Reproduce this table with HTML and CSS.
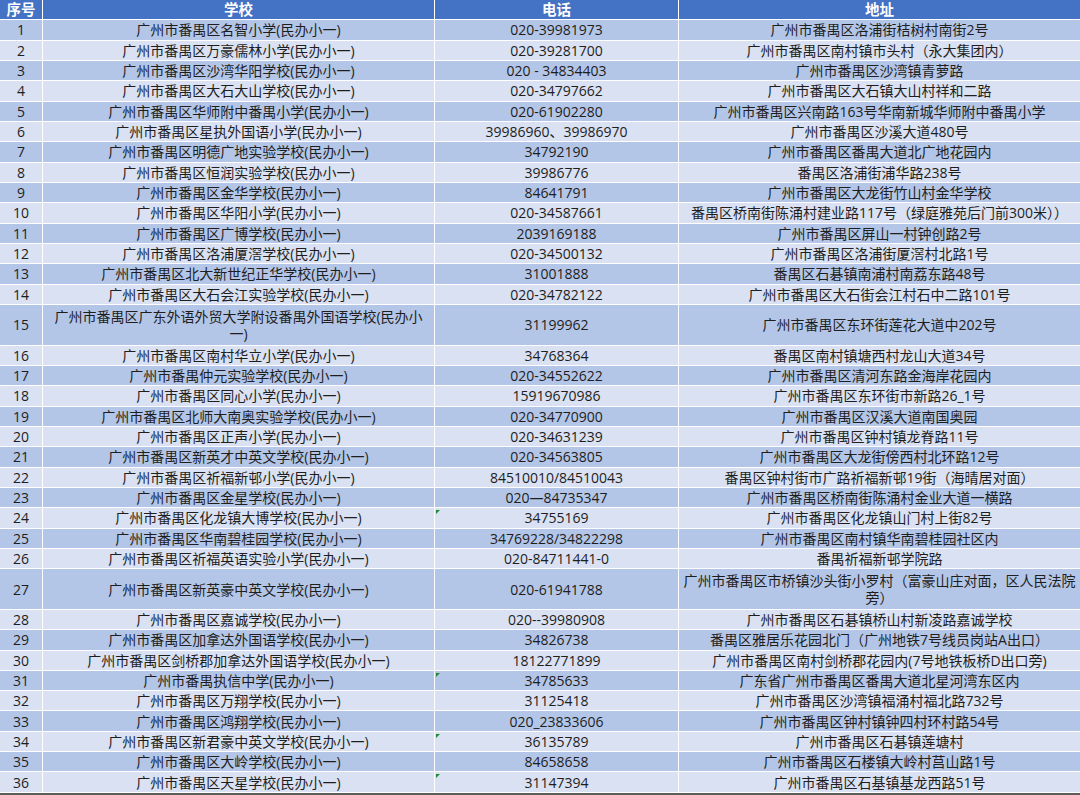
FILE: index.html
```html
<!DOCTYPE html>
<html lang="zh-CN">
<head>
<meta charset="utf-8">
<title>番禺区民办小学名单</title>
<link rel="stylesheet" href="styles.css">
</head>
<body>
<div class="table">
  <div class="row head"><div class="c">序号</div><div class="c">学校</div><div class="c">电话</div><div class="c">地址</div></div>
  <div class="row odd"><div class="c">1</div><div class="c">广州市番禺区名智小学(民办小一)</div><div class="c">020-39981973</div><div class="c">广州市番禺区洛浦街桔树村南街2号</div></div>
  <div class="row even"><div class="c">2</div><div class="c">广州市番禺区万豪儒林小学(民办小一)</div><div class="c">020-39281700</div><div class="c">广州市番禺区南村镇市头村（永大集团内）</div></div>
  <div class="row odd"><div class="c">3</div><div class="c">广州市番禺区沙湾华阳学校(民办小一)</div><div class="c">020 - 34834403</div><div class="c">广州市番禺区沙湾镇青萝路</div></div>
  <div class="row even"><div class="c">4</div><div class="c">广州市番禺区大石大山学校(民办小一)</div><div class="c">020-34797662</div><div class="c">广州市番禺区大石镇大山村祥和二路</div></div>
  <div class="row odd"><div class="c">5</div><div class="c">广州市番禺区华师附中番禺小学(民办小一)</div><div class="c">020-61902280</div><div class="c">广州市番禺区兴南路163号华南新城华师附中番禺小学</div></div>
  <div class="row even"><div class="c">6</div><div class="c">广州市番禺区星执外国语小学(民办小一)</div><div class="c">39986960、39986970</div><div class="c">广州市番禺区沙溪大道480号</div></div>
  <div class="row odd"><div class="c">7</div><div class="c">广州市番禺区明德广地实验学校(民办小一)</div><div class="c">34792190</div><div class="c">广州市番禺区番禺大道北广地花园内</div></div>
  <div class="row even"><div class="c">8</div><div class="c">广州市番禺区恒润实验学校(民办小一)</div><div class="c">39986776</div><div class="c">番禺区洛浦街浦华路238号</div></div>
  <div class="row odd"><div class="c">9</div><div class="c">广州市番禺区金华学校(民办小一)</div><div class="c">84641791</div><div class="c">广州市番禺区大龙街竹山村金华学校</div></div>
  <div class="row even"><div class="c">10</div><div class="c">广州市番禺区华阳小学(民办小一)</div><div class="c">020-34587661</div><div class="c">番禺区桥南街陈涌村建业路117号（绿庭雅苑后门前300米））</div></div>
  <div class="row odd"><div class="c">11</div><div class="c">广州市番禺区广博学校(民办小一)</div><div class="c">2039169188</div><div class="c">广州市番禺区屏山一村钟创路2号</div></div>
  <div class="row even"><div class="c">12</div><div class="c">广州市番禺区洛浦厦滘学校(民办小一)</div><div class="c">020-34500132</div><div class="c">广州市番禺区洛浦街厦滘村北路1号</div></div>
  <div class="row odd"><div class="c">13</div><div class="c">广州市番禺区北大新世纪正华学校(民办小一)</div><div class="c">31001888</div><div class="c">番禺区石碁镇南浦村南荔东路48号</div></div>
  <div class="row even"><div class="c">14</div><div class="c">广州市番禺区大石会江实验学校(民办小一)</div><div class="c">020-34782122</div><div class="c">广州市番禺区大石街会江村石中二路101号</div></div>
  <div class="row odd tall"><div class="c">15</div><div class="c">广州市番禺区广东外语外贸大学附设番禺外国语学校(民办小一)</div><div class="c">31199962</div><div class="c">广州市番禺区东环街莲花大道中202号</div></div>
  <div class="row even"><div class="c">16</div><div class="c">广州市番禺区南村华立小学(民办小一)</div><div class="c">34768364</div><div class="c">番禺区南村镇塘西村龙山大道34号</div></div>
  <div class="row odd"><div class="c">17</div><div class="c">广州市番禺仲元实验学校(民办小一)</div><div class="c">020-34552622</div><div class="c">广州市番禺区清河东路金海岸花园内</div></div>
  <div class="row even"><div class="c">18</div><div class="c">广州市番禺区同心小学(民办小一)</div><div class="c">15919670986</div><div class="c">广州市番禺区东环街市新路26_1号</div></div>
  <div class="row odd"><div class="c">19</div><div class="c">广州市番禺区北师大南奥实验学校(民办小一)</div><div class="c">020-34770900</div><div class="c">广州市番禺区汉溪大道南国奥园</div></div>
  <div class="row even"><div class="c">20</div><div class="c">广州市番禺区正声小学(民办小一)</div><div class="c">020-34631239</div><div class="c">广州市番禺区钟村镇龙脊路11号</div></div>
  <div class="row odd"><div class="c">21</div><div class="c">广州市番禺区新英才中英文学校(民办小一)</div><div class="c">020-34563805</div><div class="c">广州市番禺区大龙街傍西村北环路12号</div></div>
  <div class="row even"><div class="c">22</div><div class="c">广州市番禺区祈福新邨小学(民办小一)</div><div class="c">84510010/84510043</div><div class="c">番禺区钟村街市广路祈福新邨19街（海晴居对面）</div></div>
  <div class="row odd"><div class="c">23</div><div class="c">广州市番禺区金星学校(民办小一)</div><div class="c">020—84735347</div><div class="c">广州市番禺区桥南街陈涌村金业大道一横路</div></div>
  <div class="row even"><div class="c">24</div><div class="c">广州市番禺区化龙镇大博学校(民办小一)</div><div class="c mark">34755169</div><div class="c">广州市番禺区化龙镇山门村上街82号</div></div>
  <div class="row odd"><div class="c">25</div><div class="c">广州市番禺区华南碧桂园学校(民办小一)</div><div class="c">34769228/34822298</div><div class="c">广州市番禺区南村镇华南碧桂园社区内</div></div>
  <div class="row even"><div class="c">26</div><div class="c">广州市番禺区祈福英语实验小学(民办小一)</div><div class="c">020-84711441-0</div><div class="c">番禺祈福新邨学院路</div></div>
  <div class="row odd tall"><div class="c">27</div><div class="c">广州市番禺区新英豪中英文学校(民办小一)</div><div class="c">020-61941788</div><div class="c">广州市番禺区市桥镇沙头街小罗村（富豪山庄对面，区人民法院旁）</div></div>
  <div class="row even"><div class="c">28</div><div class="c">广州市番禺区嘉诚学校(民办小一)</div><div class="c">020--39980908</div><div class="c">广州市番禺区石碁镇桥山村新凌路嘉诚学校</div></div>
  <div class="row odd"><div class="c">29</div><div class="c">广州市番禺区加拿达外国语学校(民办小一)</div><div class="c">34826738</div><div class="c">番禺区雅居乐花园北门（广州地铁7号线员岗站A出口）</div></div>
  <div class="row even"><div class="c">30</div><div class="c">广州市番禺区剑桥郡加拿达外国语学校(民办小一)</div><div class="c">18122771899</div><div class="c">广州市番禺区南村剑桥郡花园内(7号地铁板桥D出口旁)</div></div>
  <div class="row odd"><div class="c">31</div><div class="c">广州市番禺执信中学(民办小一)</div><div class="c mark">34785633</div><div class="c">广东省广州市番禺区番禺大道北星河湾东区内</div></div>
  <div class="row even"><div class="c">32</div><div class="c">广州市番禺区万翔学校(民办小一)</div><div class="c">31125418</div><div class="c">广州市番禺区沙湾镇福涌村福北路732号</div></div>
  <div class="row odd"><div class="c">33</div><div class="c">广州市番禺区鸿翔学校(民办小一)</div><div class="c">020_23833606</div><div class="c">广州市番禺区钟村镇钟四村环村路54号</div></div>
  <div class="row even"><div class="c">34</div><div class="c">广州市番禺区新君豪中英文学校(民办小一)</div><div class="c mark">36135789</div><div class="c">广州市番禺区石碁镇莲塘村</div></div>
  <div class="row odd"><div class="c">35</div><div class="c">广州市番禺区大岭学校(民办小一)</div><div class="c">84658658</div><div class="c">广州市番禺区石楼镇大岭村莒山路1号</div></div>
  <div class="row even"><div class="c">36</div><div class="c">广州市番禺区天星学校(民办小一)</div><div class="c mark">31147394</div><div class="c">广州市番禺区石基镇基龙西路51号</div></div>
</div>
</body>
</html>
```

FILE: styles.css
```css
* { box-sizing: border-box; }
html, body { margin: 0; padding: 0; background: #ffffff; }
body {
  width: 1080px;
  font-family: "Open Sans", "Noto Sans CJK SC", sans-serif;
  font-size: 14px;
  color: #1e1e1e;
}
.table {
  width: 1080px;
  border-bottom: 2px solid #5c5c5c;
}
.row {
  display: grid;
  grid-template-columns: 43px 392px 244px 1fr;
  height: 20.33px;
  border-bottom: 1px solid #ffffff;
}
.row.tall { height: 40.66px; }
.head { background: #4472c4; color: #ffffff; font-weight: bold; font-size: 14.5px; }
.odd { background: #b4c6e7; }
.even { background: #d9e1f2; }
.c {
  display: flex;
  align-items: center;
  justify-content: center;
  text-align: center;
  padding: 0 3px;
  border-right: 1px solid #ffffff;
  line-height: 17px;
  white-space: normal;
  overflow: hidden;
  position: relative;
}
.c:last-child { border-right: none; }
.mark::before {
  content: "";
  position: absolute;
  left: 1px;
  top: 2px;
  width: 0;
  height: 0;
  border-top: 4px solid #1f8a3b;
  border-right: 4px solid transparent;
}
```
